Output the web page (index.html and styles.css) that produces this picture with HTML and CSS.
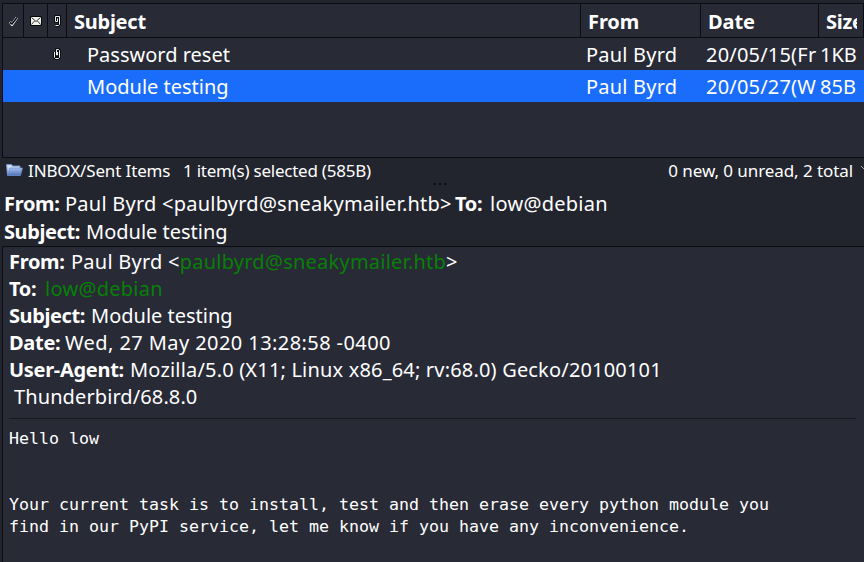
FILE: index.html
```html
<!DOCTYPE html>
<html lang="en">
<head>
<meta charset="utf-8">
<title>Mail</title>
<link rel="stylesheet" href="styles.css">
</head>
<body>
<main class="app">
  <section class="list">
    <div class="row head">
      <div class="cell mark"><svg width="9" height="10" viewBox="0 0 9 10"><path d="M1 6l2 2.500 5-7" fill="none" stroke="#fff" stroke-width="2.600"/><path d="M1 6.500l2 1.500 5-6.500" fill="none" stroke="#08090c" stroke-width="1.600"/></svg></div>
      <div class="cell status"><svg width="12" height="12" viewBox="0 0 12 12"><path d="M.5 1.500h11v9H.5z" fill="#f0f0ec" stroke="#050608"/><path d="M1.500 2.500L6 6.500l4.500-4M1.500 9.500l3-3.500M10.500 9.500l-3-3.500" fill="none" stroke="#34363a"/></svg></div>
      <div class="cell clip"><svg width="7" height="12" viewBox="0 0 7 12"><path d="M1.500 10.500h3l1-1v-8h-4v5h2V3.500" fill="none" stroke="#050608" stroke-width="2.500"/><path d="M1.500 10.500h3l1-1v-8h-4v5h2V3.500" fill="none" stroke="#eee"/></svg></div>
      <div class="cell subject">Subject</div>
      <div class="cell from">From</div>
      <div class="cell date">Date</div>
      <div class="cell size"><span class="clipped">Size</span></div>
    </div>
    <div class="row">
      <div class="cell mark"></div>
      <div class="cell status"></div>
      <div class="cell clip"><svg width="8" height="12" viewBox="0 0 8 12"><path d="M1.500 4v5.500l1 1h3l1-1v-7l-1-1h-2v5.500h1V4" fill="#08090c" stroke="#050608" stroke-width="2.500"/><path d="M1.500 4v5.500l1 1h3l1-1v-7l-1-1h-2v5.500h1V4" fill="none" stroke="#eee"/></svg></div>
      <div class="cell subject">Password reset</div>
      <div class="cell from">Paul Byrd</div>
      <div class="cell date">20/05/15(Fr</div>
      <div class="cell size">1KB</div>
    </div>
    <div class="row selected">
      <div class="cell mark"></div>
      <div class="cell status"></div>
      <div class="cell clip"></div>
      <div class="cell subject">Module testing</div>
      <div class="cell from">Paul Byrd</div>
      <div class="cell date">20/05/27(W</div>
      <div class="cell size">85B</div>
    </div>
  </section>
  <section class="statusbar">
    <svg class="folder" width="17" height="14" viewBox="0 0 17 14"><defs><linearGradient id="g" x2="0" y2="1"><stop stop-color="#a9c0ec"/><stop offset="1" stop-color="#4d72bd"/></linearGradient></defs><path d="M.5 1.500h5l1 1.500h7.500v9H1.500z" fill="#d2dcf0" stroke="#6f8fca"/><path d="M3.500 5h13l-2 7.500h-13z" fill="url(#g)" stroke="#6c8ccc" stroke-width=".7"/></svg>
    <span class="path">INBOX/Sent Items</span>
    <span class="count">1 item(s) selected (585B)</span>
    <span class="total">0 new, 0 unread, 2 total</span>
    <svg class="chevron" width="3" height="8" viewBox="0 0 3 8"><path d="M0 1l4 4" stroke="#aaa" fill="none"/></svg>
    <div class="grip"><i></i><i></i><i></i></div>
  </section>
  <header class="summary">
    <div class="line"><b class="s-from">From:</b><span class="s-addr">Paul Byrd &lt;paulbyrd@sneakymailer.htb&gt;</span><b class="s-to">To:</b><span class="s-low">low@debian</span></div>
    <div class="line"><b class="s-sub">Subject:</b><span class="s-mod">Module testing</span></div>
  </header>
  <article class="message">
    <div class="fields">
      <div class="field"><b class="f-from">From:</b><span class="s-addr">Paul Byrd &lt;<a>paulbyrd@sneakymailer.htb</a>&gt;</span></div>
      <div class="field"><b class="f-to">To:</b><a class="s-low">low@debian</a></div>
      <div class="field"><b class="s-sub">Subject:</b><span class="s-mod">Module testing</span></div>
      <div class="field"><b class="f-date">Date:</b><span class="f-when">Wed, 27 May 2020 13:28:58 -0400</span></div>
      <div class="field"><b class="f-agent">User-Agent:</b><span class="f-moz">Mozilla/5.0 (X11; Linux x86_64; rv:68.0) Gecko/20100101</span></div>
      <div class="field"><span class="f-bird">Thunderbird/68.8.0</span></div>
    </div>
    <pre>Hello low


Your current task is to install, test and then erase every python module you
find in our PyPI service, let me know if you have any inconvenience.</pre>
  </article>
</main>
</body>
</html>
```
FILE: styles.css
```css
* { box-sizing: border-box; }
body {
  margin: 0;
  width: 864px;
  height: 562px;
  overflow: hidden;
  background: #23252e;
  color: #fff;
  font: 20px/27px "Noto Sans", sans-serif;
}
b { letter-spacing: -.3px; }
.app { height: 562px; display: flex; flex-direction: column; padding: 3px 0 0 2px; }
.list { height: 155px; background: #282a36; border: 1px solid #0b0c10; border-right: 0; }
.row { display: grid; grid-template-columns: 21px 24px 19px 514px 120px 118px 45px; height: 32px; line-height: 33px; white-space: nowrap; overflow: hidden; }
.head { height: 34px; border-bottom: 1px solid #0b0c10; font-weight: 700; line-height: 36px; letter-spacing: -.25px; }
.selected { background: #1a6dfa; }
.cell { overflow: hidden; }
.mark, .status, .clip { display: flex; align-items: center; justify-content: center; }
.row:not(.head) .clip { justify-content: flex-start; padding-left: 5px; }
.head .cell { border-right: 1px solid #0b0c10; }
.subject { padding-left: 20px; }
.from { padding-left: 5px; letter-spacing: .2px; }
.date { padding-left: 5px; letter-spacing: .2px; }
.size { padding-left: 1px; }
.head .subject { padding-left: 7px; }
.head .from, .head .date { padding-left: 7px; letter-spacing: -.1px; }
.head .size { padding-left: 7px; }
.clipped { display: block; width: 31px; overflow: hidden; }
.statusbar { position: relative; height: 32px; display: flex; align-items: flex-start; font-size: 17px; line-height: 26px; white-space: nowrap; }
.folder { margin: 5px 5px 0 4px; }
.path { width: 155px; letter-spacing: -.13px; }
.count { letter-spacing: -.24px; }
.total { margin-left: auto; letter-spacing: -.08px; }
.chevron { margin: 7px 0 0 8px; }
.grip { position: absolute; left: 432px; top: 25px; display: flex; gap: 3px; }
.grip i { width: 2px; height: 2px; background: #08090c; }
.summary { height: 56px; padding-left: 2px; }
.line { height: 28px; line-height: 28px; display: flex; white-space: pre; }
.field { height: 27px; display: flex; white-space: pre; }
.s-from { width: 61px; }
.s-addr { width: 390px; letter-spacing: .24px; }
.s-to { width: 35px; }
.s-low { letter-spacing: .27px; }
.s-sub { width: 82px; letter-spacing: -.4px; }
.message { flex: 1; border: 1px solid #0b0c10; border-width: 1px 0 0 1px; background: #282a36; padding: 1px 8px 0 6px; }
.fields { height: 171px; border-bottom: 1px solid #17191f; }
.f-from { width: 62px; }
.f-to { width: 36px; }
.f-date { width: 56px; }
.f-when { letter-spacing: .42px; }
.f-agent { width: 121px; }
.f-moz { letter-spacing: .18px; }
.f-bird { margin-left: 5px; letter-spacing: .1px; }
a { color: #078007; }
pre { margin: 9px 0 0; font: 16.61px/22px "DejaVu Sans Mono", monospace; }
```
